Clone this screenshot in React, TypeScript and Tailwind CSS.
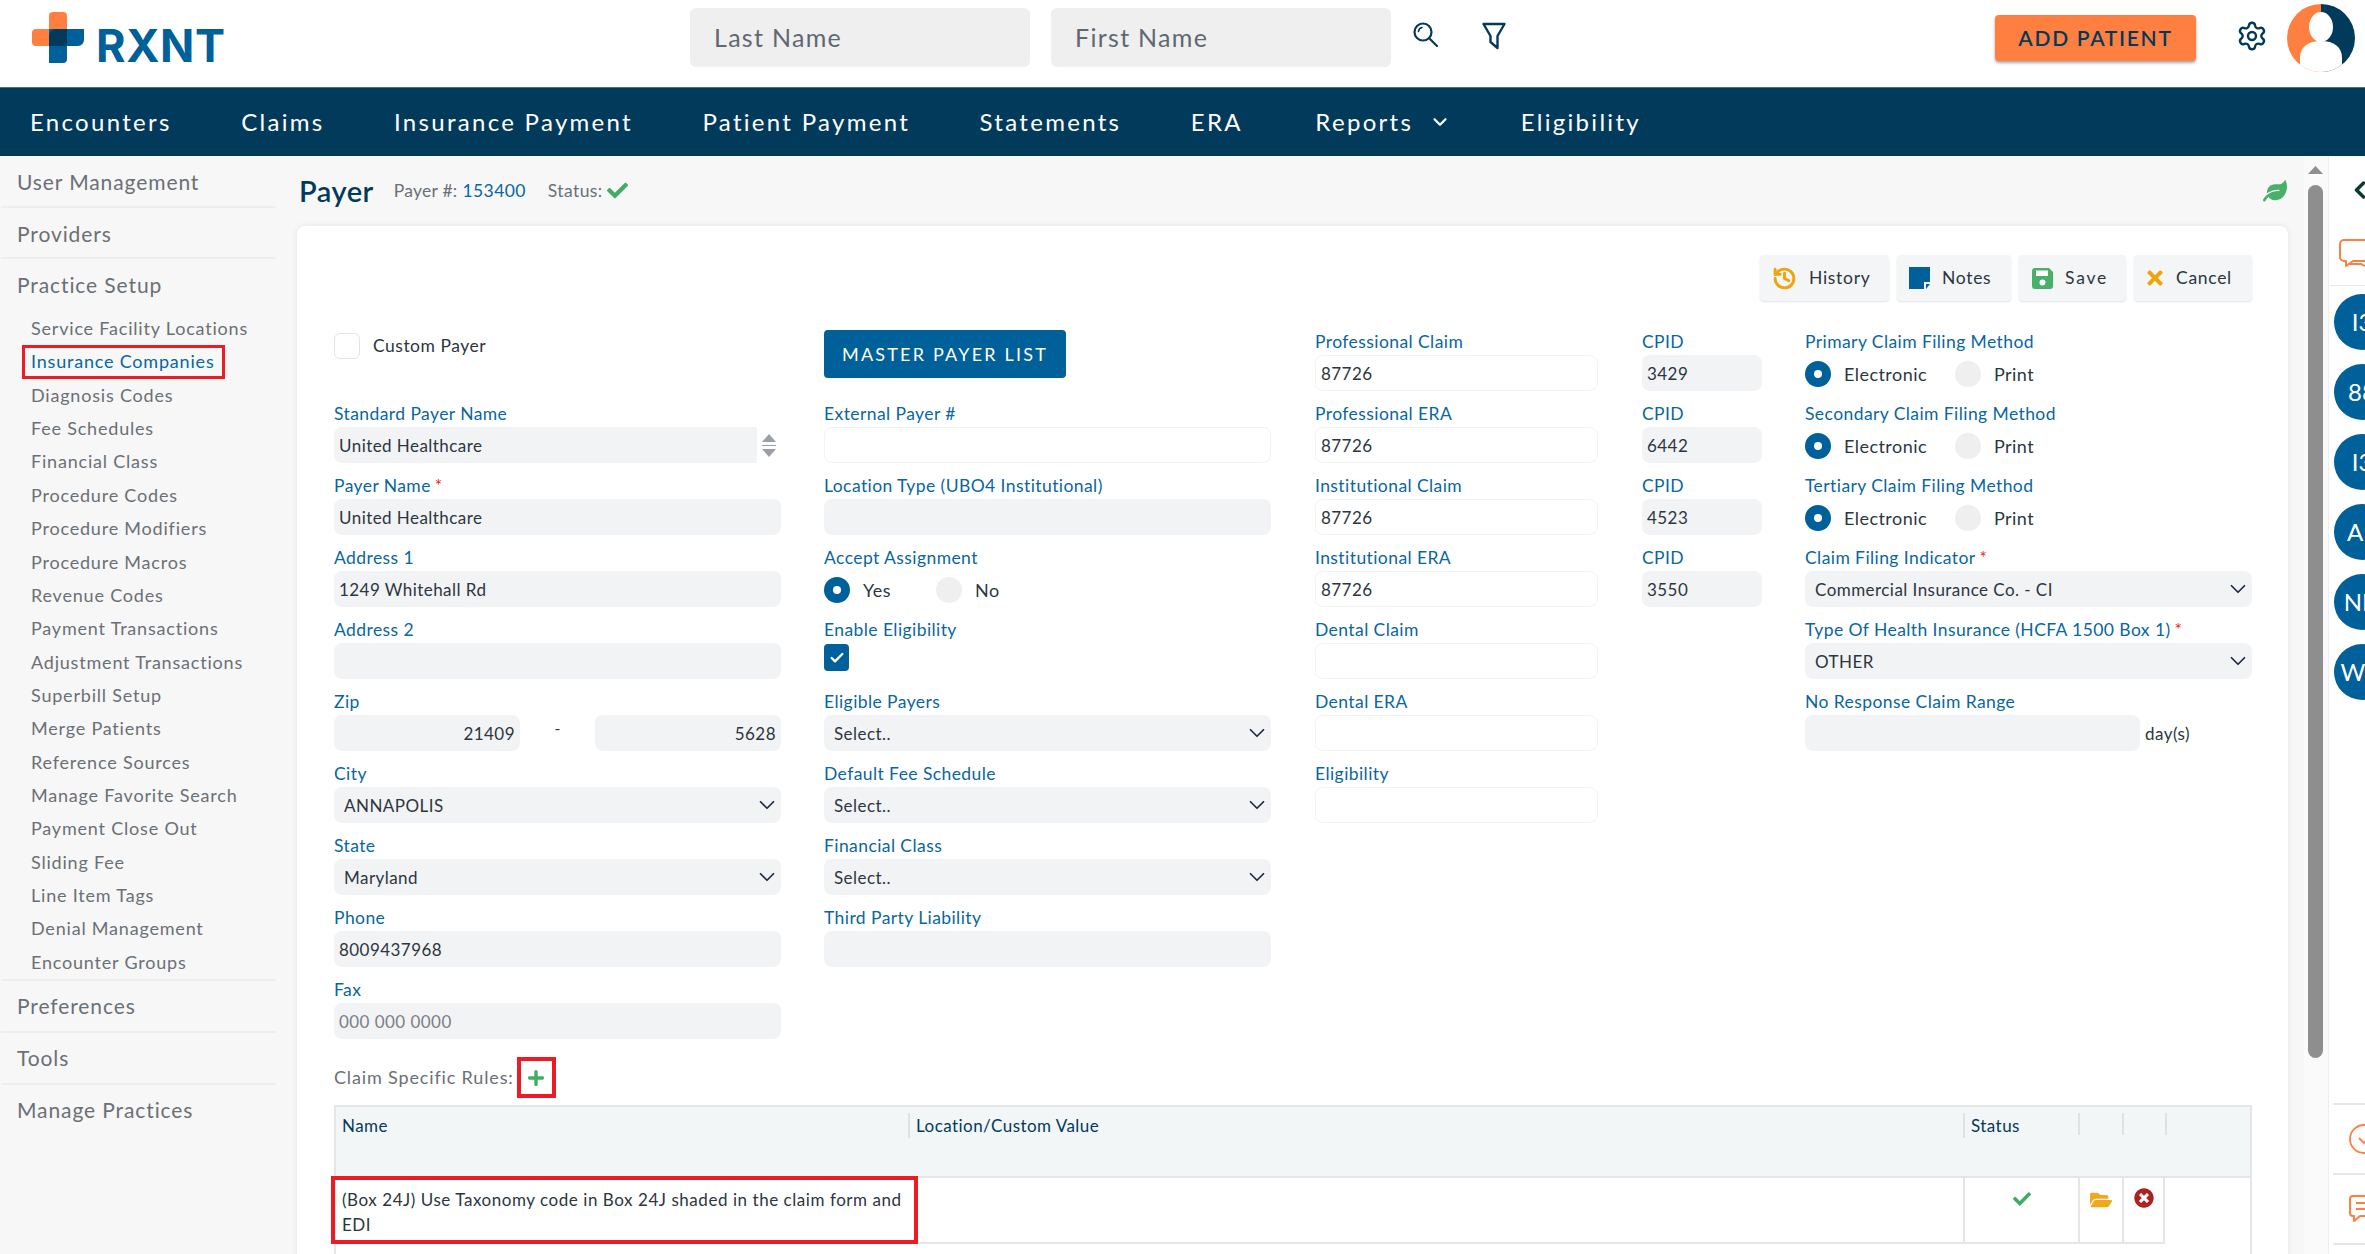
import React from "react";
import { ChevronDown, ChevronLeft, Settings, History, Check } from "lucide-react";
import { FaFolderOpen, FaTimesCircle, FaLeaf, FaCheck, FaTimes, FaPlus } from "react-icons/fa";

const Label = ({ children, req }: { children: React.ReactNode; req?: boolean }) => (
  <div className="h-[27px] leading-[28px] text-[17.5px] tracking-[0.42px] text-[#0a66a0] whitespace-nowrap">
    {children}
    {req && <span className="text-[#f01c1c] ml-1">*</span>}
  </div>
);

const Field = ({ label, value, req, white, right, muted }: { label?: string; value?: string; req?: boolean; white?: boolean; right?: boolean; muted?: boolean }) => (
  <div className="h-[72px]">
    <Label req={req}>{label}</Label>
    <div className={`h-[36px] rounded-[8px] px-[5px] pt-[1px] flex items-center text-[17px] tracking-[0.45px] ${white ? "bg-white border border-[#f2f3f5]" : "bg-[#f2f3f5]"} ${right ? "justify-end" : ""} ${muted ? "text-[#7a7f85]" : "text-[#2c3640]"}`}>
      {value}
    </div>
  </div>
);

const SelectField = ({ label, value, req }: { label: string; value: string; req?: boolean }) => (
  <div className="h-[72px]">
    <Label req={req}>{label}</Label>
    <div className="h-[36px] rounded-[8px] pl-[10px] pr-[1px] flex items-center justify-between bg-[#f2f3f5] text-[17px] tracking-[0.45px] text-[#2c3640]">
      <span className="pt-[1px]">{value}</span>
      <ChevronDown size={26} strokeWidth={1.6} className="text-[#1f2a44]" />
    </div>
  </div>
);

const Radio = ({ on, label, w }: { on?: boolean; label: string; w: string }) => (
  <div className={`flex items-center gap-[13px] ${w}`}>
    <span className={`w-[26px] h-[26px] rounded-full flex items-center justify-center ${on ? "bg-[#00609a]" : "bg-[#efefef]"}`}>
      {on && <span className="w-[8px] h-[8px] rounded-full bg-white" />}
    </span>
    <span className="text-[18px] tracking-[0.45px] text-[#2c3640] pt-[1px]">{label}</span>
  </div>
);

const RadioField = ({ label, a, b, w }: { label: string; a: string; b: string; w: string }) => (
  <div className="h-[72px]">
    <Label>{label}</Label>
    <div className="flex items-center h-[36px] pt-[1px]">
      <Radio on label={a} w={w} />
      <Radio label={b} w="" />
    </div>
  </div>
);

const ToolButton = ({ icon, label, w, extra }: { icon: React.ReactNode; label: string; w: string; extra?: string }) => (
  <div className={`h-[46px] ${w} rounded-[4px] bg-[#f3f5f6] shadow-[0_1px_2px_rgba(0,0,0,0.12)] flex items-center text-[17.5px] text-[#2c3640] ${extra ?? "pl-[12px] gap-[12px] tracking-[0.7px]"}`}>
    {icon}
    <span>{label}</span>
  </div>
);

const subItems = [
  "Service Facility Locations", "Insurance Companies", "Diagnosis Codes", "Fee Schedules", "Financial Class",
  "Procedure Codes", "Procedure Modifiers", "Procedure Macros", "Revenue Codes", "Payment Transactions",
  "Adjustment Transactions", "Superbill Setup", "Merge Patients", "Reference Sources", "Manage Favorite Search",
  "Payment Close Out", "Sliding Fee", "Line Item Tags", "Denial Management", "Encounter Groups",
];

const navItems = ["Encounters", "Claims", "Insurance Payment", "Patient Payment", "Statements", "ERA"];

const Logo = () => (
  <div className="flex items-end gap-[12px] -mt-[11px]">
    <svg width="52" height="52" viewBox="0 0 52 52">
      <path d="M17 4a4 4 0 0 1 4-4H31a4 4 0 0 1 4 4V34H4a4 4 0 0 1-4-4V21a4 4 0 0 1 4-4H17Z" fill="#ff7f41" />
      <path d="M17 17H52V28a6 6 0 0 1-6 6H35V47a4 4 0 0 1-4 4H17Z" fill="#00609a" />
      <path d="M24 17H35V34H17V24a7 7 0 0 1 7-7Z" fill="#023a5c" />
    </svg>
    <span className="font-[family-name:Inter,sans-serif] font-bold text-[45px] leading-[36px] tracking-[0.6px] text-[#00609a]">RXNT</span>
  </div>
);

export default function App() {
  return (
    <div className="w-[2365px] h-[1254px] overflow-hidden flex flex-col bg-white font-[family-name:Lato,sans-serif] text-[#2c3640]">
      {/* top bar */}
      <header className="h-[87px] shrink-0 flex items-center bg-white">
        <div className="w-[690px] pl-[32px] shrink-0"><Logo /></div>
        <div className="w-[340px] h-[59px] -mt-[12px] rounded-[6px] bg-[#efefef] flex items-center pl-[24px] text-[25px] tracking-[1.3px] text-[#5f6870]">Last Name</div>
        <div className="w-[340px] h-[59px] -mt-[12px] ml-[21px] rounded-[6px] bg-[#efefef] flex items-center pl-[24px] text-[25px] tracking-[1.3px] text-[#5f6870]">First Name</div>
        <svg width="25" height="25" viewBox="0 0 25 25" className="ml-[22px] -mt-[18px]" fill="none" stroke="#023a5c" strokeWidth="2.2" strokeLinecap="round">
          <circle cx="10" cy="10" r="8.5" />
          <path d="M5.5 9.5a4.5 4.5 0 0 1 3.5-4" strokeWidth="1.6" />
          <path d="M16.5 16.5L24 24" />
        </svg>
        <svg width="24" height="28" viewBox="0 0 24 28" className="ml-[44px] -mt-[16px]" fill="none" stroke="#023a5c" strokeWidth="2.4" strokeLinejoin="round">
          <path d="M1.5 2H22.5L15.5 14V26L8.5 20V14Z" />
        </svg>
        <div className="ml-[489px] w-[201px] h-[46px] -mt-[11px] rounded-[4px] bg-[#ff7f41] shadow-[0_2px_3px_rgba(0,0,0,0.35)] flex items-center justify-center text-[21px] font-semibold tracking-[1.7px] text-[#023a5c]">ADD PATIENT</div>
        <Settings size={32} strokeWidth={1.8} className="ml-[40px] -mt-[16px] text-[#023a5c]" />
        <svg width="68" height="68" viewBox="0 0 68 68" className="ml-[19px] -mt-[11px]">
          <defs>
            <clipPath id="av"><circle cx="34" cy="34" r="34" /></clipPath>
          </defs>
          <g clipPath="url(#av)">
            <rect width="34" height="68" fill="#ff7f41" />
            <rect x="34" width="34" height="68" fill="#023a5c" />
            <ellipse cx="34" cy="23" rx="12" ry="15" fill="#fff" />
            <path d="M13 68V54c0-11 8-17 21-17s21 6 21 17v14Z" fill="#fff" />
          </g>
        </svg>
      </header>

      {/* nav */}
      <nav className="h-[69px] shrink-0 bg-[#023a5c] border-t border-[#4a6d85] flex items-center pl-[30px] gap-[69.5px] text-[24px] tracking-[2.3px] text-white">
        {navItems.map((n) => <span key={n}>{n}</span>)}
        <span className="flex items-center gap-[16px] ml-[3px]">Reports <ChevronDown size={22} strokeWidth={2.5} /></span>
        <span>Eligibility</span>
      </nav>

      <div className="flex-1 min-h-0 flex bg-[#f7f7f7]">
        {/* sidebar */}
        <aside className="w-[278px] shrink-0 text-[#6a7076]">
          <div className="text-[21px] tracking-[0.9px] pl-[16px] ml-[1px] mr-[2px] h-[52px] leading-[52px] border-b-2 border-[#eeeeee]">User Management</div>
          <div className="text-[21px] tracking-[0.9px] pl-[16px] ml-[1px] mr-[2px] h-[51px] leading-[52px] border-b-2 border-[#eeeeee]">Providers</div>
          <div className="text-[21px] tracking-[0.9px] pl-[16px] ml-[1px] mr-[2px] h-[53px] leading-[52px]">Practice Setup</div>
          <ul className="border-b-2 border-[#eeeeee] ml-[1px] mr-[2px]">
            {subItems.map((s) => (
              <li key={s} className={`relative h-[33.37px] leading-[33.37px] pl-[30px] text-[18px] tracking-[0.8px] whitespace-nowrap ${s === "Insurance Companies" ? "text-[#0a66a0]" : ""}`}>
                {s}
                {s === "Insurance Companies" && <span className="absolute left-[21px] top-0 w-[203px] h-[34px] border-[3px] border-[#ed1c24]" />}
              </li>
            ))}
          </ul>
          <div className="text-[21px] tracking-[0.9px] pl-[16px] ml-[1px] mr-[2px] h-[52px] leading-[50px] border-b-2 border-[#eeeeee]">Preferences</div>
          <div className="text-[21px] tracking-[0.9px] pl-[16px] ml-[1px] mr-[2px] h-[52px] leading-[50px] border-b-2 border-[#eeeeee]">Tools</div>
          <div className="text-[21px] tracking-[0.9px] pl-[16px] ml-[1px] mr-[2px] h-[52px] leading-[50px]">Manage Practices</div>
        </aside>

        {/* main */}
        <main className="w-[2026px] shrink-0 pl-[19px] pr-[16px]">
          <div className="h-[70px] flex items-center pb-[1px]">
            <span className="text-[29px] font-semibold tracking-[0.5px] text-[#023a5c] ml-[2px]">Payer</span>
            <span className="ml-[20px] pt-[2px] text-[17.5px] tracking-[0.25px] text-[#6a7076]">Payer #:</span>
            <span className="ml-[5px] pt-[2px] text-[17.5px] tracking-[0.4px] text-[#0a66a0]">153400</span>
            <span className="ml-[22px] pt-[2px] text-[17.5px] tracking-[0.4px] text-[#6a7076]">Status:</span>
            <FaCheck size={21} className="ml-[4px] text-[#3fae64]" />
            <FaLeaf size={24} className="ml-auto mr-[1px] text-[#48b068]" />
          </div>
          <section className="h-[1100px] bg-white rounded-[8px] shadow-[0_0_6px_rgba(0,0,0,0.08)] pl-[37px] pr-[36px] pt-[29px]">
            <div className="flex justify-end gap-[8px] h-[46px]">
              <ToolButton label="History" w="w-[129px]" icon={<History size={25} strokeWidth={2.8} className="text-[#f0a30a]" />} />
              <ToolButton label="Notes" w="w-[114px]" icon={
                <svg width="21" height="22" viewBox="0 0 21 22"><path d="M0 0H21V15H15V22H0Z" fill="#00609a" /><path d="M17 17H21L17 22Z" fill="#00609a" /></svg>
              } />
              <ToolButton label="Save" w="w-[107px]" extra="pl-[13px] gap-[12px] tracking-[1.8px]" icon={
                <svg width="21" height="21" viewBox="0 0 21 21"><path d="M3 0H17L21 4V18a3 3 0 0 1-3 3H3a3 3 0 0 1-3-3V3a3 3 0 0 1 3-3Z" fill="#48b068" /><rect x="4" y="2.5" width="12" height="5.5" fill="#fff" /><circle cx="10.5" cy="14.5" r="3" fill="#fff" /></svg>
              } />
              <ToolButton label="Cancel" w="w-[118px]" extra="pl-[10px] gap-[10px] tracking-[0.7px]" icon={<FaTimes size={22} className="text-[#f0a30a]" />} />
            </div>

            <div className="flex mt-[27px] h-[720px]">
              {/* col 1 */}
              <div className="w-[447px]">
                <div className="h-[72px] flex items-start pt-[5px]">
                  <span className="w-[26px] h-[26px] rounded-[6px] border border-[#e4e4e4] bg-white" />
                  <span className="ml-[13px] leading-[26px] text-[17.5px] tracking-[0.5px]">Custom Payer</span>
                </div>
                <div className="h-[72px]">
                  <Label>Standard Payer Name</Label>
                  <div className="h-[36px] rounded-[8px] bg-[#f2f3f5] flex items-center justify-between pl-[5px] text-[17px] tracking-[0.45px]">
                    <span className="pt-[1px]">United Healthcare</span>
                    <span className="w-[24px] h-[36px] bg-white rounded-r-[8px] flex flex-col items-center justify-center gap-[3px]">
                      <svg width="14" height="8" viewBox="0 0 14 8"><path d="M7 0L14 8H0Z" fill="#9aa0a6" /></svg>
                      <span className="w-[14px] h-px bg-[#9aa0a6]" />
                      <svg width="14" height="8" viewBox="0 0 14 8"><path d="M0 0H14L7 8Z" fill="#9aa0a6" /></svg>
                    </span>
                  </div>
                </div>
                <Field label="Payer Name" value="United Healthcare" req />
                <Field label="Address 1" value="1249 Whitehall Rd" />
                <Field label="Address 2" />
                <div className="h-[72px]">
                  <Label>Zip</Label>
                  <div className="flex items-start">
                    <div className="w-[186px] h-[36px] rounded-[8px] bg-[#f2f3f5] flex items-center justify-end px-[5px] pt-[1px] text-[17px] tracking-[0.45px]">21409</div>
                    <div className="w-[75px] text-center leading-[26px] text-[16px]">-</div>
                    <div className="w-[186px] h-[36px] rounded-[8px] bg-[#f2f3f5] flex items-center justify-end px-[5px] pt-[1px] text-[17px] tracking-[0.45px]">5628</div>
                  </div>
                </div>
                <SelectField label="City" value="ANNAPOLIS" />
                <SelectField label="State" value="Maryland" />
                <Field label="Phone" value="8009437968" />
                <Field label="Fax" value="000 000 0000" muted />
              </div>

              {/* col 2 */}
              <div className="w-[447px] ml-[43px]">
                <div className="h-[72px] pt-[2px]">
                  <div className="w-[242px] h-[48px] rounded-[4px] bg-[#00609a] flex items-center justify-center text-[18px] tracking-[2.2px] text-white">MASTER PAYER LIST</div>
                </div>
                <Field label="External Payer #" white />
                <Field label="Location Type (UBO4 Institutional)" />
                <div className="h-[72px]">
                  <Label>Accept Assignment</Label>
                  <div className="flex items-center h-[36px] pt-[2px]">
                    <Radio on label="Yes" w="w-[112px]" />
                    <Radio label="No" w="" />
                  </div>
                </div>
                <div className="h-[72px]">
                  <Label>Enable Eligibility</Label>
                  <span className="w-[25px] h-[27px] mt-[1px] rounded-[4px] bg-[#00609a] flex items-center justify-center">
                    <Check size={16} strokeWidth={3.5} className="text-white" />
                  </span>
                </div>
                <SelectField label="Eligible Payers" value="Select.." />
                <SelectField label="Default Fee Schedule" value="Select.." />
                <SelectField label="Financial Class" value="Select.." />
                <Field label="Third Party Liability" />
              </div>

              {/* col 3 */}
              <div className="w-[283px] ml-[44px]">
                <Field label="Professional Claim" value="87726" white />
                <Field label="Professional ERA" value="87726" white />
                <Field label="Institutional Claim" value="87726" white />
                <Field label="Institutional ERA" value="87726" white />
                <Field label="Dental Claim" white />
                <Field label="Dental ERA" white />
                <Field label="Eligibility" white />
              </div>

              {/* col 4 */}
              <div className="w-[120px] ml-[44px]">
                <Field label="CPID" value="3429" />
                <Field label="CPID" value="6442" />
                <Field label="CPID" value="4523" />
                <Field label="CPID" value="3550" />
              </div>

              {/* col 5 */}
              <div className="w-[447px] ml-[43px]">
                <RadioField label="Primary Claim Filing Method" a="Electronic" b="Print" w="w-[150px]" />
                <RadioField label="Secondary Claim Filing Method" a="Electronic" b="Print" w="w-[150px]" />
                <RadioField label="Tertiary Claim Filing Method" a="Electronic" b="Print" w="w-[150px]" />
                <SelectField label="Claim Filing Indicator" value="Commercial Insurance Co. - CI" req />
                <SelectField label="Type Of Health Insurance (HCFA 1500 Box 1)" value="OTHER" req />
                <div className="h-[72px]">
                  <Label>No Response Claim Range</Label>
                  <div className="flex items-center">
                    <div className="w-[335px] h-[36px] rounded-[8px] bg-[#f2f3f5]" />
                    <span className="ml-[5px] text-[17px] tracking-[0.45px] pt-[1px]">day(s)</span>
                  </div>
                </div>
              </div>
            </div>

            {/* rules */}
            <div className="h-[41px] mt-[9px] flex items-center text-[18px] tracking-[0.85px] text-[#6a7076]">
              <span>Claim Specific Rules:</span>
              <span className="ml-[3px] w-[39px] h-[41px] border-[4px] border-[#ed1c24] flex items-center justify-center">
                <FaPlus size={18} className="text-[#3fae64]" />
              </span>
            </div>

            <div className="mt-[7px] border-x-2 border-t-2 border-[#e3e5e7] h-[300px] text-[17px] tracking-[0.45px]">
              <div className="h-[71px] bg-[#f3f6f7] border-b-2 border-[#e3e5e7] flex items-start pt-[6px] text-[#023a5c]">
                <div className="w-[572px] h-[25px] leading-[25px] pl-[6px]">Name</div>
                <div className="w-[1055px] h-[25px] leading-[25px] pl-[6px] border-l-2 border-[#dfe2e4]">Location/Custom Value</div>
                <div className="w-[115px] h-[25px] leading-[25px] pl-[6px] border-l-2 border-[#dfe2e4]">Status</div>
                <div className="w-[44px] h-[22px] border-l-2 border-[#dfe2e4]" />
                <div className="w-[43px] h-[22px] border-l-2 border-[#dfe2e4]" />
                <div className="w-0 h-[22px] border-l-2 border-[#dfe2e4]" />
              </div>
              <div className="flex">
                <div className="flex h-[66px] border-b-2 border-[#e3e5e7]">
                  <div className="relative w-[572px] pl-[6px] pt-[10px] leading-[24.5px] tracking-[0.55px] text-[#2c3640] whitespace-nowrap">
                    (Box 24J) Use Taxonomy code in Box 24J shaded in the claim form and<br />EDI
                    <span className="absolute -left-[5px] -top-[2px] w-[587px] h-[68px] border-[4px] border-[#ed1c24]" />
                  </div>
                  <div className="w-[1055px]" />
                  <div className="w-[115px] border-l-2 border-[#e3e5e7] flex justify-center pt-[12px]">
                    <FaCheck size={18} className="text-[#3fae64]" />
                  </div>
                  <div className="w-[44px] border-l-2 border-[#e3e5e7] flex justify-center pt-[11px]">
                    <FaFolderOpen size={22} className="text-[#f0a81c]" />
                  </div>
                  <div className="w-[43px] border-x-2 border-[#e3e5e7] flex justify-center pt-[10px]">
                    <FaTimesCircle size={20} className="text-[#ad2121]" />
                  </div>
                </div>
              </div>
            </div>
          </section>
        </main>

        {/* scrollbar */}
        <div className="w-[24px] shrink-0 bg-[#fafafa] flex flex-col items-center pt-[10px] pr-[2px]">
          <svg width="15" height="8" viewBox="0 0 15 8"><path d="M7.5 0L15 8H0Z" fill="#8e8e8e" /></svg>
          <div className="w-[15px] h-[873px] mt-[11px] rounded-full bg-[#8e8e8e]" />
        </div>

        {/* right panel */}
        <aside className="flex-1 min-w-0 bg-white border-l border-[#eeeeee] overflow-hidden pl-[2px]">
          <div className="h-[83px] pl-[15px] pt-[20px]"><ChevronLeft size={28} strokeWidth={3} className="text-[#0c3a2c]" /></div>
          <div className="h-[47px] flex items-start border-b border-[#e6e6e6] pl-[8px] overflow-hidden">
            <svg width="40" height="32" viewBox="0 0 40 32" fill="none" stroke="#ff7f41" strokeWidth="2" strokeLinejoin="round" className="shrink-0">
              <path d="M5 1H33a4 4 0 0 1 4 4V18a4 4 0 0 1-4 4H14L7 27V22H5a4 4 0 0 1-4-4V5a4 4 0 0 1 4-4Z" />
              <path d="M10 25H22L32 30" />
            </svg>
          </div>
          <div className="w-[56px] ml-[3px] flex flex-col gap-[14px] pt-[8px] text-[24px] text-white">
            {["I3", "88", "I3", "A1", "NH", "WH"].map((t, i) => (
              <div key={i} className="w-[56px] h-[56px] shrink-0 rounded-full bg-[#00609a] flex items-center justify-center">{t}</div>
            ))}
          </div>
          <div className="mt-[403px] border-t-2 border-[#e6e6e6] h-[70px] flex items-center overflow-hidden pl-[16px] ml-[2px]">
            <svg width="30" height="30" viewBox="0 0 30 30" fill="none" stroke="#ff7f41" strokeWidth="1.8" className="shrink-0"><circle cx="15" cy="15" r="14" /><path d="M10 14l5 5 6-6" /></svg>
          </div>
          <div className="border-t-2 border-[#e6e6e6] h-[70px] flex items-center overflow-hidden pl-[16px] ml-[2px]">
            <svg width="32" height="28" viewBox="0 0 32 28" fill="none" stroke="#ff7f41" strokeWidth="2" strokeLinejoin="round" className="shrink-0">
              <path d="M4 1H28a3 3 0 0 1 3 3V18a3 3 0 0 1-3 3H11L5 26V21H4a3 3 0 0 1-3-3V4a3 3 0 0 1 3-3Z" />
              <path d="M7 8H26M7 14H26" />
            </svg>
          </div>
          <div className="border-t-2 border-[#e6e6e6] ml-[2px]" />
        </aside>
      </div>
    </div>
  );
}
